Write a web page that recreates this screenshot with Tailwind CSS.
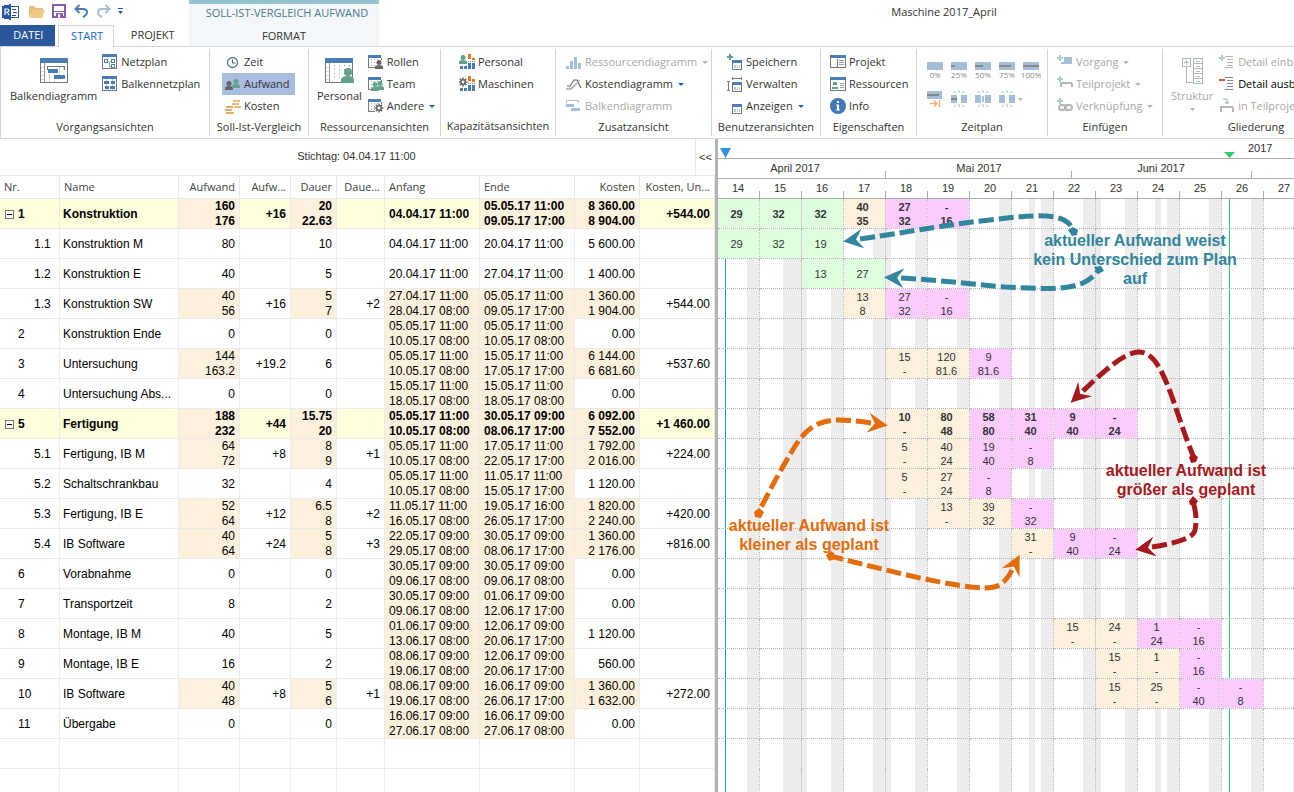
<!DOCTYPE html>
<html lang="de">
<head>
<meta charset="utf-8">
<title>Maschine 2017_April</title>
<script src="https://cdn.jsdelivr.net/npm/@tailwindcss/browser@4"></script>
</head>
<body class="bg-white">
<div class="flex h-screen flex-col overflow-hidden font-['Open_Sans',sans-serif] text-[11px] text-[#333]">

  <!-- title bar and tabs -->
  <header class="relative flex h-[46px] shrink-0">
    <div class="flex w-[189px] shrink-0 flex-col">
      <div class="flex h-[25px] items-start gap-2 pt-1 pl-[2px]" id="quick"></div>
      <nav class="flex h-[21px]">
        <a href="#" class="flex w-[55px] items-center justify-center bg-[#2a579a] pl-[2px] text-white">DATEI</a>
        <a href="#" class="z-10 ml-[3px] flex h-[22px] w-[57px] items-center justify-center border border-b-0 border-[#d4d4d4] bg-white pl-[2px] text-[#1565c8]">START</a>
        <a href="#" class="flex w-[75px] items-center justify-center pl-[2px]">PROJEKT</a>
      </nav>
    </div>
    <div class="flex w-[190px] shrink-0 flex-col border-t-4 border-[#93c4d0] bg-[#f3f7fa] text-center">
      <span class="h-[21px] pl-[6px] leading-[17px] whitespace-nowrap text-[#4a7a8c]">SOLL-IST-VERGLEICH AUFWAND</span>
      <a href="#" class="leading-[21px]">FORMAT</a>
    </div>
    <h1 class="w-[1130px] shrink-0 pt-1 text-center leading-4">Maschine 2017_April</h1>
  </header>

  <!-- ribbon -->
  <div class="flex h-[93px] shrink-0 overflow-hidden border-y border-l border-[#d4d4d4] py-[2px]" id="ribbon"></div>

  <main class="flex min-h-0 flex-1">
    <!-- task list -->
    <section class="flex w-[715px] shrink-0 flex-col overflow-hidden">
      <div class="flex h-9 shrink-0 items-stretch font-['Liberation_Sans',sans-serif]">
        <div class="flex flex-1 items-center justify-center pb-[2px] pl-[18px]">Stichtag: 04.04.17 11:00</div>
        <button class="w-5 border-l border-[#e9e9e9]">&lt;&lt;</button>
      </div>
      <table class="w-[715px] shrink-0 table-fixed border-separate border-spacing-0 font-['Liberation_Sans',sans-serif] text-[12px] text-black">
        <colgroup>
          <col class="w-[60px]"><col class="w-[119px]"><col class="w-[61px]"><col class="w-[51px]"><col class="w-[46px]">
          <col class="w-[48px]"><col class="w-[95px]"><col class="w-[95px]"><col class="w-[65px]"><col class="w-[75px]">
        </colgroup>
        <thead class="font-['Open_Sans',sans-serif] text-[11px] text-[#444]"><tr id="heads"></tr></thead>
        <tbody id="tasks"></tbody>
      </table>
    </section>

    <div class="w-[3px] shrink-0 bg-[#b3b3b3]"></div>

    <!-- timeline -->
    <section class="relative flex-1 overflow-hidden font-['Liberation_Sans',sans-serif]">
      <div class="relative h-5 border-b border-[#adadad]">
        <span class="absolute top-[3px] left-[530px] leading-3">2017</span>
        <svg class="absolute inset-0 h-5 w-full" fill="none"><path d="M2 9h11l-5.500 10z" fill="#2f93e0"/><path d="M506 13h11l-5.500 6z" fill="#2ecc71"/></svg>
      </div>
      <div class="flex h-5 w-[713px] border-b border-[#adadad] text-center leading-[18px]" id="months"></div>
      <div class="flex h-5 w-[713px] border-b border-[#adadad] text-center leading-[18px]" id="weeks"></div>
      <div class="relative">
        <svg id="stripes" class="absolute top-0 left-0 h-[600px] w-full"></svg>
        <table class="relative w-[588px] table-fixed border-separate border-spacing-0"><tbody id="load"></tbody></table>
      </div>

      <!-- annotations -->
      <svg class="absolute top-0 left-0 h-[653px] w-[576px]" viewBox="718 139 576 653" fill="none" stroke-width="5">
        <defs>
          <marker id="tipT" markerUnits="userSpaceOnUse" markerWidth="21" markerHeight="21" refX="3" refY="10" orient="auto-start-reverse"><path d="M20 10 0 0l7 10-7 10z" fill="#31859c"/></marker>
          <marker id="tipO" markerUnits="userSpaceOnUse" markerWidth="21" markerHeight="21" refX="3" refY="10" orient="auto-start-reverse"><path d="M20 10 0 0l7 10-7 10z" fill="#e46c0a"/></marker>
          <marker id="tipR" markerUnits="userSpaceOnUse" markerWidth="21" markerHeight="21" refX="3" refY="10" orient="auto-start-reverse"><path d="M20 10 0 0l7 10-7 10z" fill="#a6191e"/></marker>
        </defs>
        <g stroke="#31859c" stroke-dasharray="15 5">
          <path marker-start="url(#tipT)" d="M860 239C915 231 950 224 990 220 1030 215 1052 214 1064 220 1071 224 1073 228 1073 233"/>
          <path marker-start="url(#tipT)" d="M901 278C940 280 980 285 1005 287 1045 289 1066 290 1083 283 1091 279 1095 275 1099 269"/>
        </g>
        <path d="m1068 230 5-3 5 3-1 5-5 1zM1094 267l7-1 3 5-6 3z" fill="#31859c"/>
        <g stroke="#e46c0a" stroke-dasharray="15 5">
          <path marker-start="url(#tipO)" d="M871 423C858 421 846 420 838 420 806 420 797 443 781 470 773 484 765 500 758 513"/>
          <path marker-start="url(#tipO)" d="M1012 570C1004 586 995 588 985 588 950 587 890 571 830 556"/>
        </g>
        <path d="m754 512 5-4 5 4-3 6-6-1zM826 555l5-4 3 2 1 6-6 2z" fill="#e46c0a"/>
        <g stroke="#a6191e" stroke-dasharray="15 5">
          <path marker-start="url(#tipR)" d="M1083 391C1102 373 1124 352 1139 352 1164 352 1173 408 1194 458"/>
          <path marker-start="url(#tipR)" d="M1152 547C1176 543 1194 538 1195 530 1197 521 1196 511 1193 502"/>
        </g>
        <path d="m1189 457 5-3 4 3-2 5-5 1zM1189 501l4-5 5 5-2 3-6 1z" fill="#a6191e"/>
      </svg>
      <div class="absolute top-[92px] left-[312px] w-[210px] text-center text-base leading-[19px] font-bold text-[#31859c]">aktueller Aufwand weist kein Unterschied zum Plan auf</div>
      <div class="absolute top-[377px] left-[5px] w-[172px] text-center text-base leading-[19px] font-bold text-[#e46c0a]">aktueller Aufwand ist kleiner als geplant</div>
      <div class="absolute top-[322px] left-[382px] w-[172px] text-center text-base leading-[19px] font-bold text-[#a6191e]">aktueller Aufwand ist größer als geplant</div>
    </section>
  </main>
</div>

<script>
const svg = (body, w = 16, h = 16) => `<svg width="${w}" height="${h}" viewBox="0 0 ${w} ${h}" fill="none" shape-rendering="crispEdges" class="shrink-0">${body}</svg>`;
const smooth = (body, w = 16, h = 16) => `<svg width="${w}" height="${h}" viewBox="0 0 ${w} ${h}" fill="none" class="shrink-0">${body}</svg>`;
const person = (x, y, c) => `<g fill="${c}" shape-rendering="auto"><circle cx="${x + 4}" cy="${y + 2.5}" r="2.500"/><path d="M${x} ${y + 9}v-2q0-2 4-2t4 2v2z"/></g>`;
const gear = (x, y) => `<g shape-rendering="auto" stroke="#666"><circle cx="${x}" cy="${y}" r="2.200" stroke-width="1.600"/><path d="M${x} ${y - 4.5}v2M${x} ${y + 2.5}v2M${x - 4.5} ${y}h2M${x + 2.5} ${y}h2M${x - 3.2} ${y - 3.2}l1.500 1.500M${x + 1.7} ${y + 1.7}l1.500 1.500M${x + 3.2} ${y - 3.2}l-1.500 1.500M${x - 1.7} ${y + 1.7}l-1.500 1.500" stroke-width="1.500"/></g>`;
const sheet = '<path d="M.5 4v9.500h13V4" stroke="#777"/><path d="M0 1h13v3H0z" fill="#4a7db5"/><path d="M3.500 5v8M6.500 5v8M9.500 5v8" stroke="#aaa" stroke-dasharray="1 2"/>';
const frame = '<path d="M.5 3v11.500h14V3" stroke="#777"/><path d="M0 0h15v3H0z" fill="#4a7db5"/>';
const plus = (x, y) => `<path d="M${x} ${y + 2}h6v2h-6zM${x + 2} ${y}h2v6h-2z" fill="#a9d0c0"/>`;
const mini = '<path d="M5.500 9v6.500h9V9" stroke="#777"/><path d="M5 6h10v3H5z" fill="#4a7db5"/><path d="M7 11h2v3H7zM10 11h1v3h-1zM12 11h1v3h-1z" fill="#b5cce3"/>';

const I = {
  netz: svg(frame + '<path d="M2.500 5.500h3v3h-3zM9.500 5.500h3v3h-3zM9.500 10.500h3v3h-3z" stroke="#4a7db5"/><path d="M6 7.500h1M8 7.500h1M7.500 8v4.500H9" stroke="#999"/>'),
  balknetz: svg(frame + '<path d="M4.500 3v11M10.500 3v11" stroke="#b5cce3"/><path d="M2 5h5v3H2zM9 5h4v3H9zM3 10h4v3H3zM8 10h5v3H8z" fill="#4a7db5"/>'),
  zeit: smooth('<circle cx="7.500" cy="8.500" r="5" stroke="#557fa6" stroke-width="1.300"/><path d="M7.500 5.500v3.500h3" stroke="#555"/>'),
  aufw: smooth(person(0, 5, '#666') + person(7, 3, '#64a18c')),
  kost: smooth('<g stroke="#e9be79" stroke-width="2"><path d="M8 3h7M7 6h7M9 9h7"/></g><g stroke="#e2b269" stroke-width="2"><path d="M1 9h7M0 12h7M1 15h8"/></g>'),
  roll: svg(sheet + '<path d="M7 6h8v10H7z" fill="#fff"/>' + person(7, 6, '#666')),
  team: svg(sheet + '<path d="M4 7h12v9H4z" fill="#fff"/>' + person(3, 6, '#64a18c') + person(8, 5, '#64a18c')),
  and: svg(sheet + '<path d="M7 6h8v10H7z" fill="#fff"/>' + gear(11, 10)),
  kpers: svg(person(0, 1, '#64a18c') + '<path d="M9 0h3v5H9zM13 4h3v2h-3z" fill="#e8781e"/><path d="M9 7.500h7" stroke="#888" stroke-dasharray="1 1"/><path d="M9 9h3v6H9zM13 9h3v6h-3zM1 12h3v3H1zM5 12h3v3H5z" fill="#4a7db5"/>'),
  kmasch: svg(gear(4, 6) + '<path d="M9 0h3v5H9zM13 3h3v3h-3z" fill="#e8781e"/><path d="M9 7.500h7" stroke="#888" stroke-dasharray="1 1"/><path d="M9 9h3v6H9zM13 9h3v6h-3zM1 12h3v3H1zM5 12h3v3H5z" fill="#4a7db5"/>'),
  res: svg('<path d="M0 12h3v3H0zM4 7h3v8H4zM8 3h3v12H8zM12 9h3v6h-3z" fill="#a5bfdb"/>'),
  kd: smooth('<path d="m1 10 3 0 4-6h3l4 8" stroke="#666" stroke-width="1.200"/><path d="M0 13h5l5-5 4-4" stroke="#aaa" stroke-width="1.500"/>'),
  bd: svg('<path d="M0 2.500h13M.5 3v2M12.500 3v2" stroke="#bbb"/><path d="M0 6h8v3H0zM5 10h9v3H5z" fill="#a5bfdb"/>'),
  sp: svg('<path d="M0 2h6v2H0zM2 0h2v6H2z" fill="#64a18c"/>' + mini),
  verw: svg('<path d="M5 2.500h10M5.500 1v3M14.500 1v3M1.500 5v10M0 5.500h3M0 14.500h3" stroke="#777"/>' + mini),
  anz: svg(mini),
  proj: svg('<path d="M.5 4v9.500h15V4" stroke="#777"/><path d="M0 1h16v3H0z" fill="#4a7db5"/><path d="M7.500 5v8" stroke="#777"/><path d="M9 6.500h5M9 8.500h5M9 10.500h5" stroke="#999"/>'),
  ress: svg('<path d="M.5 4v10.500h15V4" stroke="#777"/><path d="M0 1h16v3H0z" fill="#4a7db5"/>' + '<circle cx="5" cy="7.500" r="2" fill="#64a18c"/><path d="M2 13v-2h6v2z" fill="#64a18c"/><path d="M10 7.500h4M10 9.500h4M10 11.500h4" stroke="#999"/>'),
  info: smooth('<circle cx="8" cy="8" r="8" fill="#3f78b5"/><path d="M7 3h2v2H7zM6 6.500h3v5h1v1H6v-1h1v-4H6z" fill="#fff"/>'),
  vorg: svg(plus(0, 1) + '<path d="M7 3h8v7H4V8h3z" fill="#a5bfdb"/>'),
  teil: svg(plus(0, 0) + '<path d="M3 7h12M3.500 7v4M14.500 7v4" stroke="#b5b5b5" stroke-width="2"/>'),
  verk: smooth(plus(0, 0) + '<g stroke="#b5b5b5" stroke-width="2"><rect x="2" y="7" width="7" height="5" rx="2.500"/><rect x="8" y="7" width="7" height="5" rx="2.500"/></g>'),
  ein: svg(plus(0, 1) + '<path d="M6 2.500h8M8 5.500h6M8 8.500h6M8 11.500h6M6 13.500h8" stroke="#b5b5b5"/>'),
  aus: svg('<path d="M0 3h6v2H0z" fill="#dd5a32"/><path d="M6 1.500h8M8 4.500h6M8 7.500h6M8 10.500h6M6 13.500h8" stroke="#888"/>'),
  inT: svg('<path d="M1 9h13M1.500 9v5M13.500 9v5" stroke="#b5b5b5" stroke-width="2"/><path d="M4 1h4v5M6 4l2 2 2-2" stroke="#8fb0d4" shape-rendering="auto"/>'),
  bigBalk: svg('<path d="M.5 5v19.500h27V5" stroke="#777"/><path d="M0 0h28v5H0z" fill="#4a7db5"/><path d="M4.500 5v19" stroke="#999"/><path d="M1 9.500h3M1 13.500h3M1 17.500h3M1 21.500h3M9.500 12v12M14.500 16v8M19.500 9v8M23.500 9v3" stroke="#ccdbea"/><path d="M7 8.500h18M7.500 8v4M24.500 8v4" stroke="#777"/><path d="M8 11h10v4H8zM14 17h11v4H14z" fill="#4a7db5"/>', 28, 25),
  bigPers: svg('<path d="M.5 5v19.500h27V5" stroke="#777"/><path d="M0 0h28v5H0z" fill="#4a7db5"/><path d="M4.500 5v19" stroke="#999"/><path d="M1 9.500h3M1 13.500h3M1 17.500h3M1 21.500h3" stroke="#ccdbea"/><path d="M9.500 7v16M14.500 7v16M19.500 7v16M24.500 7v16" stroke="#999" stroke-dasharray="1 3"/><g shape-rendering="auto" fill="#64a18c"><circle cx="23" cy="14" r="4"/><path d="M16 25v-3q0-4 6.500-4t6.500 4v3z"/></g>', 29, 26),
  strukt: svg('<path d="M.5.500h8v8h-8zM4.500 2v5M2 4.500h5M4.500 9v16M5 24.500h6" stroke="#b5b5b5"/><path d="M11.500.500h9v25h-9zM12 5.500h9M12 10.500h9M12 15.500h9M12 20.500h9" stroke="#b5b5b5"/><path d="M14 3.500h4M14 8.500h4M14 13.500h4M14 18.500h4M14 23.500h4" stroke="#a5c4e4"/>', 21, 26),
};

const caret = dis => `<svg width="6" height="3" viewBox="0 0 6 3" class="ml-[2px] shrink-0"><path d="M0 0h6L3 3z" fill="${dis ? '#b5b5b5' : '#1565c8'}"/></svg>`;
const btn = ([icon, text, o = '']) => `<button class="flex h-[22px] items-center gap-[3px] whitespace-nowrap ${o.includes('h') ? 'w-[73px] bg-[#a9bde0] pl-[3px] -ml-[3px]' : ''} ${o.includes('d') ? 'text-[#a8a8a8]' : o.includes('k') ? 'text-black' : ''}">${I[icon]}<span>${text}</span>${o.includes('c') ? caret(o.includes('d')) : ''}</button>`;
const col = items => `<div class="flex flex-col items-start">${items.map(btn).join('')}</div>`;
const big = (icon, text, dis) => `<button class="flex h-[66px] flex-col items-center pt-[7px] ${dis ? 'text-[#a8a8a8]' : ''}"><span class="h-[30px]">${I[icon]}</span><span class="leading-4">${text}</span>${dis ? '<svg width="5" height="3" viewBox="0 0 5 3" class="mt-1"><path d="M0 0h5L2.500 3z" fill="#b5b5b5"/></svg>' : ''}</button>`;

const pct = (n, t) => `<button class="flex w-4 flex-col items-center text-[8px] leading-[10px] text-[#888]">${svg(`<path d="M0 0h16v8H0z" fill="#a5bfdb"/>${n ? `<path d="M0 3h${n}v2H0z" fill="#888"/>` : ''}`, 16, 8)}<span>${t}</span></button>`;
const split = b => svg('<path d="M0 5h6v8H0zM10 5h6v8h-6z" fill="#a5bfdb"/><g stroke="#b0b0b0" shape-rendering="auto"><path d="m3 1 3 3M13 1l-3 3M3 17l3-3M13 17l-3-3M8 0v4M8 14v4" stroke-dasharray="3 1"/></g>' + b, 16, 18);
const zeitplan = `<div class="flex h-[66px] flex-col gap-[10px] pt-[11px]">
  <div class="flex gap-2">${pct(0, '0%')}${pct(4, '25%')}${pct(8, '50%')}${pct(12, '75%')}${pct(16, '100%')}</div>
  <div class="flex h-[18px] items-center gap-2">
    <button>${svg('<path d="M0 1h15v8H0z" fill="#a5bfdb"/><path d="M0 4h12v2H0z" fill="#888"/><path d="M3 13.500h7M7 10.500l3 3-3 3M12.500 10v7" stroke="#f2b27d" stroke-width="1.500" shape-rendering="auto"/>', 16, 18)}</button>
    <button>${split('<path d="M0 8h6v2H0z" fill="#888"/>')}</button>
    <button>${split('<path d="M7 6h2v6H7z" fill="#a5bfdb"/>')}</button>
    <button class="flex items-center">${split('')}<svg width="5" height="3" viewBox="0 0 5 3" class="ml-[3px]"><path d="M0 0h5L2.500 3z" fill="#b5b5b5"/></svg></button>
  </div></div>`;

const group = (w, pad, content, label) => `<div class="flex shrink-0 flex-col border-r border-[#d4d4d4] pt-[2px] ${w}"><div class="flex h-[66px] ${pad}">${content}</div><div class="text-center leading-5">${label}</div></div>`;

document.getElementById('ribbon').innerHTML =
  group('w-[209px]', 'pl-[9px] gap-[5px]', big('bigBalk', 'Balkendiagramm') + col([['netz', 'Netzplan'], ['balknetz', 'Balkennetzplan']]), 'Vorgangsansichten') +
  group('w-[99px]', 'pl-[15px]', col([['zeit', 'Zeit'], ['aufw', 'Aufwand', 'h'], ['kost', 'Kosten']]), 'Soll-Ist-Vergleich') +
  group('w-[132px]', 'pl-2 gap-[6px]', big('bigPers', 'Personal') + col([['roll', 'Rollen'], ['team', 'Team'], ['and', 'Andere', 'c']]), 'Ressourcenansichten') +
  group('w-[115px]', 'pl-[18px]', col([['kpers', 'Personal'], ['kmasch', 'Maschinen']]), 'Kapazitätsansichten') +
  group('w-[156px]', 'pl-[10px]', col([['res', 'Ressourcendiagramm', 'dc'], ['kd', 'Kostendiagramm', 'c'], ['bd', 'Balkendiagramm', 'd']]), 'Zusatzansicht') +
  group('w-[109px]', 'pl-[15px]', col([['sp', 'Speichern'], ['verw', 'Verwalten'], ['anz', 'Anzeigen', 'c']]), 'Benutzeransichten') +
  group('w-[96px]', 'pl-[9px]', col([['proj', 'Projekt'], ['ress', 'Ressourcen'], ['info', 'Info']]), 'Eigenschaften') +
  group('w-[131px]', 'pl-[10px]', zeitplan, 'Zeitplan') +
  group('w-[115px]', 'pl-[9px]', col([['vorg', 'Vorgang', 'dc'], ['teil', 'Teilprojekt', 'dc'], ['verk', 'Verknüpfung', 'dc']]), 'Einfügen') +
  group('w-[187px]', 'pl-2 gap-[6px]', big('strukt', 'Struktur', true) + col([['ein', 'Detail einblenden', 'd'], ['aus', 'Detail ausblenden', 'k'], ['inT', 'in Teilprojekt', 'd']]), 'Gliederung');

document.getElementById('quick').innerHTML =
  `<button>${svg('<path d="M8.500 2.500h8v11h-8" stroke="#2a579a"/><path d="M10 5.500h4M11 8.500h4M10 11.500h4" stroke="#2a579a"/><path d="m0 2 9-2v16l-9-2z" fill="#2a579a"/><path d="M3 11V5h2q2 0 2 1.500T5 8H3m2 0 2 3" stroke="#fff" stroke-width="1.200" shape-rendering="auto"/>', 17, 16)}</button>` +
  `<button class="ml-[2px]">${smooth('<path d="M0 14V2h5l2 2h7v3H4z" fill="#e9be79"/><path d="M4 6h12l-3 8H1z" fill="#f0c987"/>')}</button>` +
  `<button class="-ml-[1px]">${svg('<path d="M1 1h12v12H1z" stroke="#8c5bb0" stroke-width="2"/><path d="M1 7h12v1H1zM4 9h7v5H4z" fill="#8c5bb0"/><path d="M6 10h2v4H6z" fill="#fff"/>', 14, 14)}</button>` +
  `<button>${smooth('<path d="M1 5h8q4 0 4 3t-4 5" stroke="#4a7db5" stroke-width="2"/><path d="M5.500 1 1.500 5l4 4" stroke="#4a7db5" stroke-width="2"/>', 15, 15)}</button>` +
  `<button class="-ml-[1px]">${smooth('<path d="M14 5H6q-4 0-4 3t4 5" stroke="#a5bfdb" stroke-width="2"/><path d="m9.500 1 4 4-4 4" stroke="#a5bfdb" stroke-width="2"/>', 15, 15)}</button>` +
  `<button class="-ml-[1px] pt-1">${smooth('<path d="M0 0h5v1H0zM0 3h5L2.500 6z" fill="#1565c8"/>', 5, 6)}</button>`;

const heads = [['Nr.'], ['Name'], ['Aufwand', 1], ['Aufw...', 1], ['Dauer', 1], ['Daue...', 1], ['Anfang'], ['Ende'], ['Kosten', 1], ['Kosten, Un...', 1]];
document.getElementById('heads').innerHTML = heads.map(([t, r]) => `<th class="h-6 py-0 font-normal whitespace-nowrap shadow-[inset_-1px_-1px_0_#e9e9e9,inset_0_1px_0_#e9e9e9] ${r ? 'pr-[5px] pl-0 text-right' : 'pr-0 pl-1 text-left'}">${t}</th>`).join('');

// "a/b" holds planned and actual value, shown one above the other
const tasks = [
  ['1', 'Konstruktion', '160/176', '+16', '20/22.63', '', '04.04.17 11:00', '05.05.17 11:00/09.05.17 17:00', '8 360.00/8 904.00', '+544.00'],
  ['1.1', 'Konstruktion M', '80', '', '10', '', '04.04.17 11:00', '20.04.17 11:00', '5 600.00', ''],
  ['1.2', 'Konstruktion E', '40', '', '5', '', '20.04.17 11:00', '27.04.17 11:00', '1 400.00', ''],
  ['1.3', 'Konstruktion SW', '40/56', '+16', '5/7', '+2', '27.04.17 11:00/28.04.17 08:00', '05.05.17 11:00/09.05.17 17:00', '1 360.00/1 904.00', '+544.00'],
  ['2', 'Konstruktion Ende', '0', '', '0', '', '05.05.17 11:00/10.05.17 08:00', '05.05.17 11:00/10.05.17 08:00', '0.00', ''],
  ['3', 'Untersuchung', '144/163.2', '+19.2', '6', '', '05.05.17 11:00/10.05.17 08:00', '15.05.17 11:00/17.05.17 17:00', '6 144.00/6 681.60', '+537.60'],
  ['4', 'Untersuchung Abs...', '0', '', '0', '', '15.05.17 11:00/18.05.17 08:00', '15.05.17 11:00/18.05.17 08:00', '0.00', ''],
  ['5', 'Fertigung', '188/232', '+44', '15.75/20', '', '05.05.17 11:00/10.05.17 08:00', '30.05.17 09:00/08.06.17 17:00', '6 092.00/7 552.00', '+1 460.00'],
  ['5.1', 'Fertigung, IB M', '64/72', '+8', '8/9', '+1', '05.05.17 11:00/10.05.17 08:00', '17.05.17 11:00/22.05.17 17:00', '1 792.00/2 016.00', '+224.00'],
  ['5.2', 'Schaltschrankbau', '32', '', '4', '', '05.05.17 11:00/10.05.17 08:00', '11.05.17 11:00/15.05.17 17:00', '1 120.00', ''],
  ['5.3', 'Fertigung, IB E', '52/64', '+12', '6.5/8', '+2', '11.05.17 11:00/16.05.17 08:00', '19.05.17 16:00/26.05.17 17:00', '1 820.00/2 240.00', '+420.00'],
  ['5.4', 'IB Software', '40/64', '+24', '5/8', '+3', '22.05.17 09:00/29.05.17 08:00', '30.05.17 09:00/08.06.17 17:00', '1 360.00/2 176.00', '+816.00'],
  ['6', 'Vorabnahme', '0', '', '0', '', '30.05.17 09:00/09.06.17 08:00', '30.05.17 09:00/09.06.17 08:00', '0.00', ''],
  ['7', 'Transportzeit', '8', '', '2', '', '30.05.17 09:00/09.06.17 08:00', '01.06.17 09:00/12.06.17 17:00', '0.00', ''],
  ['8', 'Montage, IB M', '40', '', '5', '', '01.06.17 09:00/13.06.17 08:00', '12.06.17 09:00/20.06.17 17:00', '1 120.00', ''],
  ['9', 'Montage, IB E', '16', '', '2', '', '08.06.17 09:00/19.06.17 08:00', '12.06.17 09:00/20.06.17 17:00', '560.00', ''],
  ['10', 'IB Software', '40/48', '+8', '5/6', '+1', '08.06.17 09:00/19.06.17 08:00', '16.06.17 09:00/26.06.17 17:00', '1 360.00/1 632.00', '+272.00'],
  ['11', 'Übergabe', '0', '', '0', '', '16.06.17 09:00/27.06.17 08:00', '16.06.17 09:00/27.06.17 08:00', '0.00', ''],
  Array(10).fill(''), Array(10).fill(''),
];
const isSum = r => r[0] === '1' || r[0] === '5';
document.getElementById('tasks').innerHTML = tasks.map(r => `<tr class="${isSum(r) ? 'bg-[#ffffdc] font-bold' : ''}">` + r.map((v, i) => {
  const right = [2, 3, 4, 5, 8, 9].includes(i);
  const two = v.includes('/');
  let body = v.replace('/', '<br>');
  if (i === 0) body = `<div class="flex items-center gap-1 ${v.includes('.') ? 'pl-[34px]' : isSum(r) ? 'pl-[5px]' : 'pl-[18px]'}">${isSum(r) ? `<button aria-label="Zuklappen">${svg('<path d="M.5.500h8v8h-8z" fill="#fff" stroke="#777"/><path d="M2 4.500h5" stroke="#000"/>', 9, 9)}</button>` : ''}${v}</div>`;
  return `<td class="h-[30px] whitespace-nowrap leading-[15px] shadow-[inset_-1px_-1px_0_#ebebeb] ${i === 0 ? 'p-0' : right ? 'py-0 pr-[5px] text-right' : i === 1 ? 'py-0 pl-[3px]' : 'py-0 pl-1'} ${two ? 'bg-[#fdf0dc]' : ''}">${body}</td>`;
}).join('') + '</tr>').join('');

document.getElementById('months').innerHTML = [['w-[168px] pr-[14px]', 'April 2017'], ['w-[186px]', 'Mai 2017'], ['w-[180px] pr-[2px]', 'Juni 2017'], ['w-[180px]', '']]
  .map(([w, t]) => `<div class="shrink-0 bg-[linear-gradient(#adadad,#adadad)] bg-[length:1px_7px] bg-right-bottom bg-no-repeat ${w}">${t}</div>`).join('');
document.getElementById('weeks').innerHTML = Array.from({ length: 14 }, (_, i) =>
  `<div class="w-[42px] shrink-0 bg-[linear-gradient(#adadad,#adadad)] bg-[length:1px_7px] bg-right-bottom bg-no-repeat pr-[2px]">${14 + i}</div>`).join('');

// days off (start, width), then status date and finish line
document.getElementById('stripes').innerHTML = [[29, 12], [65, 24], [113, 12], [155, 18], [197, 12], [239, 12], [281, 12], [311, 6], [323, 12], [365, 18], [407, 12], [437, 6], [449, 12], [491, 12], [533, 12], [575, 12]]
  .map(([x, w]) => `<rect x="${x}" y="0" width="${w}" height="600" fill="#ededed"/>`).join('') +
  '<rect x="7" y="0" width="1" height="600" fill="#2f93e0"/><rect x="511" y="0" width="1" height="600" fill="#2ecc71"/>';

const G = 'bg-[#ddffdd]', O = 'bg-[#fdf0dc]', P = 'bg-[#fccbff]';
const load = {
  0: [[0, G, '29'], [1, G, '32'], [2, G, '32'], [3, O, '40/35'], [4, P, '27/32'], [5, P, '-/16']],
  1: [[0, G, '29'], [1, G, '32'], [2, G, '19']],
  2: [[2, G, '13'], [3, G, '27']],
  3: [[3, O, '13/8'], [4, P, '27/32'], [5, P, '-/16']],
  5: [[4, O, '15/-'], [5, O, '120/81.6'], [6, P, '9/81.6']],
  7: [[4, O, '10/-'], [5, O, '80/48'], [6, P, '58/80'], [7, P, '31/40'], [8, P, '9/40'], [9, P, '-/24']],
  8: [[4, O, '5/-'], [5, O, '40/24'], [6, P, '19/40'], [7, P, '-/8']],
  9: [[4, O, '5/-'], [5, O, '27/24'], [6, P, '-/8']],
  10: [[5, O, '13/-'], [6, O, '39/32'], [7, P, '-/32']],
  11: [[7, O, '31/-'], [8, P, '9/40'], [9, P, '-/24']],
  14: [[8, O, '15/-'], [9, O, '24/-'], [10, P, '1/24'], [11, P, '-/16']],
  15: [[9, O, '15/-'], [10, O, '1/-'], [11, P, '-/16']],
  16: [[9, O, '15/-'], [10, O, '25/-'], [11, P, '-/40'], [12, P, '-/8']],
};
document.getElementById('load').innerHTML = tasks.map((r, y) => `<tr class="${isSum(r) ? 'font-bold' : ''}">` + Array.from({ length: 14 }, (_, x) => {
  const c = (load[y] || []).find(c => c[0] === x);
  return `<td class="h-[30px] border-r border-dotted border-[#b5b5b5] bg-clip-padding p-0 pr-1 text-center leading-[14px] ${r[0] ? 'border-b' : ''} ${c ? c[1] : ''}">${c ? c[2].replace('/', '<br>') : ''}</td>`;
}).join('') + '</tr>').join('');
</script>
</body>
</html>
